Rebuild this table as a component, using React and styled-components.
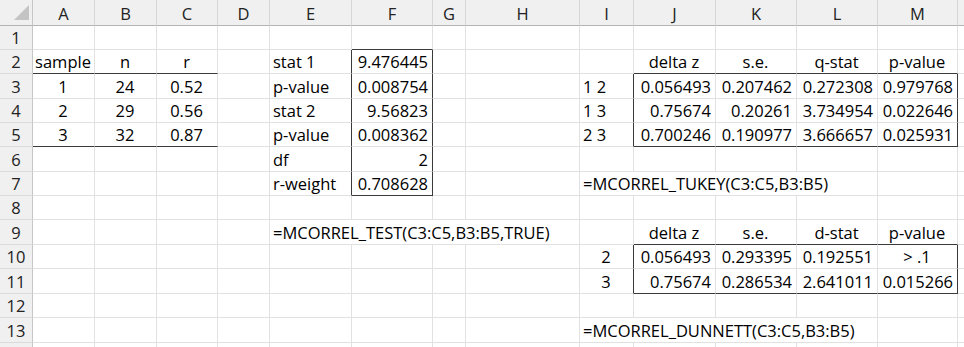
import styled, { createGlobalStyle } from "styled-components";

const GRID = "#e1e1e1";
const DARK = "#3a3a3a";

const COLS = ["A", "B", "C", "D", "E", "F", "G", "H", "I", "J", "K", "L", "M", "N"];
const WIDTHS = [62, 62, 61, 52, 82, 81, 33, 114, 54, 82, 81, 81, 80, 60];
const HEIGHTS = [24, 24, 25, 24, 24, 25, 24, 24, 25, 24, 25, 24, 25, 24];
// the last column and row only peek in at the window edge
const LABELLED_COLS = 13;
const LABELLED_ROWS = 13;

// l = left, r = right, c = centred; s = how many columns the text runs over
const l = (v, s = 1) => ({ v, a: "l", s });
const r = (v) => ({ v, a: "r", s: 1 });
const c = (v) => ({ v, a: "c", s: 1 });

const DATA = {
  A2: c("sample"), B2: c("n"), C2: c("r"),
  A3: c("1"), B3: c("24"), C3: c("0.52"),
  A4: c("2"), B4: c("29"), C4: c("0.56"),
  A5: c("3"), B5: c("32"), C5: c("0.87"),

  E2: l("stat 1"), F2: r("9.476445"),
  E3: l("p-value"), F3: r("0.008754"),
  E4: l("stat 2"), F4: r("9.56823"),
  E5: l("p-value"), F5: r("0.008362"),
  E6: l("df"), F6: r("2"),
  E7: l("r-weight"), F7: r("0.708628"),
  E9: l("=MCORREL_TEST(C3:C5,B3:B5,TRUE)", 4),

  J2: c("delta z"), K2: c("s.e."), L2: c("q-stat"), M2: c("p-value"),
  I3: l("1 2"), J3: r("0.056493"), K3: r("0.207462"), L3: r("0.272308"), M3: r("0.979768"),
  I4: l("1 3"), J4: r("0.75674"), K4: r("0.20261"), L4: r("3.734954"), M4: r("0.022646"),
  I5: l("2 3"), J5: r("0.700246"), K5: r("0.190977"), L5: r("3.666657"), M5: r("0.025931"),
  I7: l("=MCORREL_TUKEY(C3:C5,B3:B5)", 4),

  J9: c("delta z"), K9: c("s.e."), L9: c("d-stat"), M9: c("p-value"),
  I10: c("2"), J10: r("0.056493"), K10: r("0.293395"), L10: r("0.192551"), M10: c("> .1"),
  I11: c("3"), J11: r("0.75674"), K11: r("0.286534"), L11: r("2.641011"), M11: r("0.015266"),
  I13: l("=MCORREL_DUNNETT(C3:C5,B3:B5)", 4),
};

// outlined ranges (column index, row number)
const BOXES = [
  { c1: 5, c2: 5, r1: 2, r2: 7 },
  { c1: 9, c2: 12, r1: 3, r2: 5 },
  { c1: 9, c2: 12, r1: 10, r2: 11 },
];
// bottom borders under A2:C2 and A5:C5
const UNDERLINES = [
  { c1: 0, c2: 2, r: 2 },
  { c1: 0, c2: 2, r: 5 },
];

const darkRight = (row, col) =>
  BOXES.some((b) => row >= b.r1 && row <= b.r2 && (col === b.c2 || col === b.c1 - 1));

const darkBottom = (row, col) =>
  BOXES.some((b) => col >= b.c1 && col <= b.c2 && (row === b.r2 || row === b.r1 - 1)) ||
  UNDERLINES.some((u) => u.r === row && col >= u.c1 && col <= u.c2);

const GlobalStyle = createGlobalStyle`
  html, body {
    margin: 0;
    padding: 0;
    background: #fff;
    overflow: hidden;
  }
  body {
    font-family: "Open Sans", "Liberation Sans", sans-serif;
    font-size: 16.5px;
    color: #000;
  }
`;

const Sheet = styled.div`
  display: grid;
  grid-template-columns: 33px ${WIDTHS.map((w) => `${w}px`).join(" ")};
  grid-template-rows: 26px ${HEIGHTS.map((h) => `${h}px`).join(" ")};
  width: 964px;
  height: 347px;
  overflow: hidden;
`;

const Corner = styled.div`
  background: #f0f0f0;
  border-right: 1px solid #c6c6c6;
  border-bottom: 1px solid #b4b4b4;
  display: flex;
  align-items: flex-end;
  justify-content: flex-end;
  padding: 0 3px 5px 0;

  svg {
    display: block;
  }
`;

const ColHead = styled.div`
  background: #f0f0f0;
  border-right: 1px solid #d6d6d6;
  border-bottom: 1px solid #b4b4b4;
  display: flex;
  align-items: center;
  justify-content: center;
  color: #222;
  padding-top: 1px;
`;

const RowHead = styled.div`
  background: #f0f0f0;
  border-right: 1px solid #c6c6c6;
  border-bottom: 1px solid #dadada;
  display: flex;
  align-items: center;
  justify-content: center;
  color: #222;
`;

const ALIGN = { l: "flex-start", r: "flex-end", c: "center" };

const Cell = styled.div`
  grid-column: span ${(p) => p.$span};
  display: flex;
  align-items: flex-end;
  justify-content: ${(p) => ALIGN[p.$align]};
  padding: 0 4px 3px 3px;
  line-height: 16px;
  white-space: nowrap;
  overflow: hidden;
  border-right: 1px solid ${(p) => (p.$darkR ? DARK : GRID)};
  border-bottom: 1px solid ${(p) => (p.$darkB ? DARK : GRID)};
`;

function SheetRow({ row }) {
  const out = [<RowHead key="h">{row <= LABELLED_ROWS ? row : ""}</RowHead>];
  let col = 0;
  while (col < COLS.length) {
    const cell = DATA[`${COLS[col]}${row}`];
    const span = cell ? cell.s : 1;
    const last = col + span - 1;
    let under = false;
    for (let k = col; k <= last; k++) under = under || darkBottom(row, k);
    out.push(
      <Cell
        key={col}
        $span={span}
        $align={cell ? cell.a : "l"}
        $darkR={darkRight(row, last)}
        $darkB={under}
      >
        {cell ? cell.v : ""}
      </Cell>
    );
    col += span;
  }
  return out;
}

export default function App() {
  return (
    <>
      <GlobalStyle />
      <Sheet>
        <Corner>
          <svg width="15" height="15" viewBox="0 0 15 15">
            <path d="M15 0 L15 15 L0 15 Z" fill="#c4c4c4" />
          </svg>
        </Corner>
        {COLS.map((name, i) => (
          <ColHead key={name}>{i < LABELLED_COLS ? name : ""}</ColHead>
        ))}
        {HEIGHTS.map((_, i) => (
          <SheetRow key={i} row={i + 1} />
        ))}
      </Sheet>
    </>
  );
}
